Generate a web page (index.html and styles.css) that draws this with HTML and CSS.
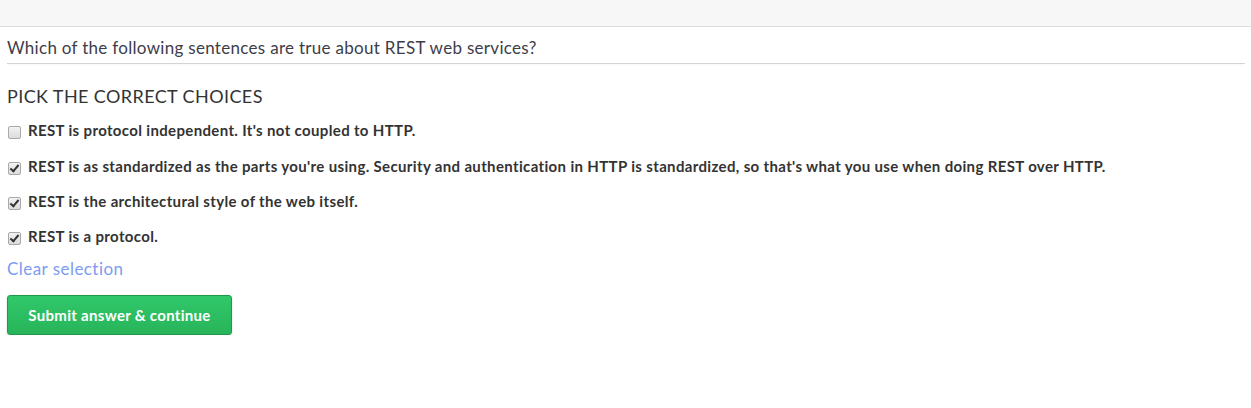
FILE: index.html
```html
<!DOCTYPE html>
<html>
<head>
<meta charset="utf-8">
<link rel="stylesheet" href="styles.css">
</head>
<body>
<div class="topbar"></div>
<main class="quiz">
  <div class="question">Which of the following sentences are true about REST web services?</div>
  <h2 class="pick">PICK THE CORRECT CHOICES</h2>
  <ul class="choices">
    <li><span class="box"></span><span class="label">REST is protocol independent. It's not coupled to HTTP.</span></li>
    <li><span class="box checked"></span><span class="label">REST is as standardized as the parts you're using. Security and authentication in HTTP is standardized, so that's what you use when doing REST over HTTP.</span></li>
    <li><span class="box checked"></span><span class="label">REST is the architectural style of the web itself.</span></li>
    <li><span class="box checked"></span><span class="label">REST is a protocol.</span></li>
  </ul>
  <a class="clear" href="#">Clear selection</a>
  <button class="submit">Submit answer &amp; continue</button>
</main>
</body>
</html>
```
FILE: styles.css
```css
html, body {
  margin: 0;
  padding: 0;
  background: #fff;
  font-family: Lato, "Open Sans", sans-serif;
  color: #333;
}
.topbar {
  height: 26px;
  background: #f7f7f7;
  border-bottom: 1px solid #dcdcdc;
}
.quiz {
  padding: 0 6px 0 7px;
}
.question {
  font-size: 17px;
  letter-spacing: 0.3px;
  color: #3d3d4a;
  padding: 11px 0 5px 0;
  line-height: 20px;
  border-bottom: 1px solid #d4d4d4;
  box-shadow: 0 3px 3px -2px rgba(0,0,0,0.04);
}
.pick {
  margin: 21px 0 0 0;
  font-size: 18px;
  font-weight: 400;
  color: #333;
  line-height: 22px;
  letter-spacing: 0.4px;
}
.choices {
  list-style: none;
  margin: 13px 0 0 0;
  padding: 0;
}
.choices li {
  display: flex;
  align-items: flex-start;
  height: 35px;
}
.choices li:first-child {
  height: 36px;
}
.box {
  flex: none;
  width: 11px;
  height: 11px;
  margin: 6px 0 0 1px;
  border: 1px solid #a9a9a9;
  border-radius: 2px;
  background: linear-gradient(#f2f2f2, #dcdcdc);
  position: relative;
}
.box.checked::after {
  content: "";
  position: absolute;
  left: 3px;
  top: 0px;
  width: 3px;
  height: 7px;
  border: solid #333;
  border-width: 0 2px 2px 0;
  transform: rotate(40deg);
}
.label {
  margin-left: 7px;
  font-size: 15px;
  font-weight: 700;
  color: #333;
  line-height: 20px;
  letter-spacing: 0.35px;
}
.clear {
  display: block;
  margin-top: -3px;
  font-size: 17px;
  letter-spacing: 0.45px;
  color: #7c9cf2;
  text-decoration: none;
  line-height: 22px;
  width: max-content;
}
.submit {
  display: block;
  margin: 15px 0 0 0;
  width: 225px;
  height: 40px;
  border: 1px solid #1f9a48;
  border-radius: 3px;
  background: linear-gradient(#30c86a, #28b45a);
  box-shadow: 0 1px 2px rgba(0,0,0,0.2);
  color: #fff;
  font-family: Lato, "Open Sans", sans-serif;
  font-weight: 700;
  font-size: 15px;
  letter-spacing: 0.3px;
}
```
